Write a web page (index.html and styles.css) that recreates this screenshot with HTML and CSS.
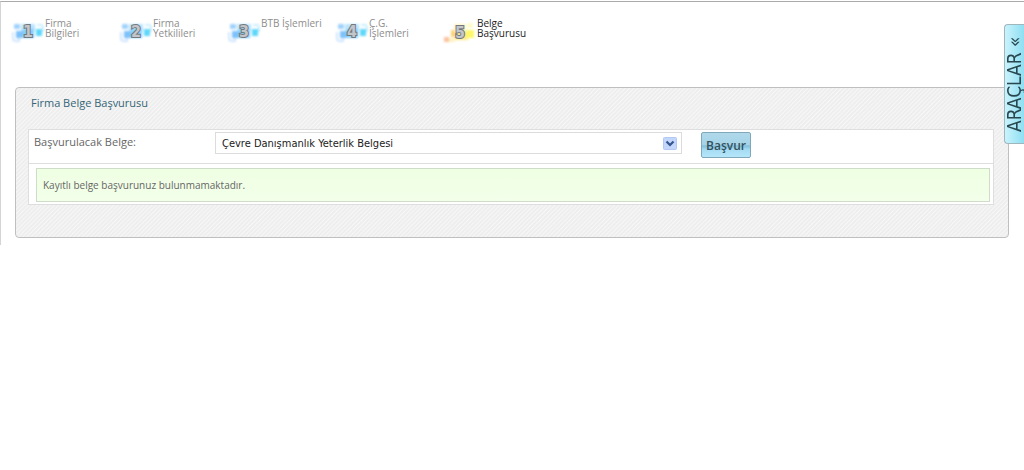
FILE: index.html
```html
<!DOCTYPE html>
<html lang="tr">
<head>
<meta charset="utf-8">
<title>Firma Belge Başvurusu</title>
<link rel="stylesheet" href="styles.css">
</head>
<body>
<svg class="defs" width="0" height="0" aria-hidden="true">
  <defs>
    <filter id="soft" x="-20%" y="-20%" width="140%" height="140%" color-interpolation-filters="sRGB"><feGaussianBlur stdDeviation="0.8"/></filter>
    <g id="tiles-blue" filter="url(#soft)">
      <rect x="2" y="4" width="6" height="5" rx="1" fill="#9fd2fb"/>
      <rect x="9" y="4" width="14" height="7" fill="#b9e4ff"/>
      <rect x="4" y="11" width="11" height="7" fill="#7fc2fb"/>
      <rect x="11" y="9" width="11" height="9" fill="#85d0fc"/>
      <rect x="24" y="9" width="6" height="7" fill="#5fd7fb"/>
      <path d="M25 5h4q2 0 2 3v4" fill="none" stroke="#c9eefd" stroke-width="2"/>
      <path d="M1 12v6q0 3 3 3h3v-3" fill="none" stroke="#cfe5fe" stroke-width="2"/>
    </g>
    <g id="tiles-gold" filter="url(#soft)">
      <rect x="0" y="17" width="5" height="5" fill="#fcc3a0"/>
      <rect x="7" y="10" width="6" height="7" fill="#fad27a"/>
      <rect x="5" y="18" width="6" height="4" fill="#fff2c4"/>
      <rect x="10" y="4" width="12" height="8" fill="#fff6c4"/>
      <rect x="11" y="12" width="13" height="8" fill="#ffe98a"/>
      <rect x="22" y="10" width="8" height="8" fill="#fff76a"/>
      <rect x="23" y="3" width="6" height="5" fill="#fffbcc"/>
    </g>
  </defs>
</svg>
<div class="page">
  <nav class="steps">
    <a class="step" href="#"><svg class="step-icon" viewBox="0 0 32 24"><use href="#tiles-blue"/><text class="digit" x="16" y="17">1</text></svg><span>Firma<br>Bilgileri</span></a>
    <a class="step" href="#"><svg class="step-icon" viewBox="0 0 32 24"><use href="#tiles-blue"/><text class="digit" x="16" y="17">2</text></svg><span>Firma<br>Yetkilileri</span></a>
    <a class="step" href="#"><svg class="step-icon" viewBox="0 0 32 24"><use href="#tiles-blue"/><text class="digit" x="16" y="17">3</text></svg><span>BTB İşlemleri</span></a>
    <a class="step" href="#"><svg class="step-icon" viewBox="0 0 32 24"><use href="#tiles-blue"/><text class="digit" x="16" y="17">4</text></svg><span>Ç.G.<br>İşlemleri</span></a>
    <a class="step current" href="#" aria-current="step"><svg class="step-icon" viewBox="0 0 32 24"><use href="#tiles-gold"/><text class="digit" x="16" y="18">5</text></svg><span>Belge<br>Başvurusu</span></a>
  </nav>
  <main class="panel">
    <h1 class="title">Firma Belge Başvurusu</h1>
    <div class="card">
      <form class="row">
        <label class="label" for="belge">Başvurulacak Belge:</label>
        <div class="picker">
          <select class="select" id="belge"><option>Çevre Danışmanlık Yeterlik Belgesi</option></select>
          <svg class="arrow" viewBox="0 0 14 13" aria-hidden="true"><rect x=".5" y=".5" width="13" height="12" rx="1" fill="#c3d6fb" stroke="#b3c8f3"/><path d="M3.5 4.5 7 8l3.5-3.5" fill="none" stroke="#35558f" stroke-width="2.2"/></svg>
        </div>
        <button class="apply" type="button">Başvur</button>
      </form>
      <div class="notice-row"><p class="notice">Kayıtlı belge başvurunuz bulunmamaktadır.</p></div>
    </div>
  </main>
</div>
<button class="tools" type="button"><span>ARAÇLAR «</span></button>
</body>
</html>
```
FILE: styles.css
```css
* { box-sizing: border-box; }
body {
  margin: 0;
  background: #fff;
  font-family: "Open Sans", "Noto Sans", sans-serif;
  overflow-x: hidden;
}
.defs { position: absolute; }
.page {
  margin-top: 1px;
  padding: 16px 15px 7px 11px;
  border-top: 1px solid #aaa;
  border-left: 1px solid #d4d4d4;
}
.steps { display: flex; height: 69px; }
.step {
  display: flex;
  gap: 1px;
  width: 108px;
  font-size: 10px;
  line-height: 10px;
  color: #8d8d8d;
  text-decoration: none;
  white-space: nowrap;
}
.step.current { color: #222; }
.step-icon { width: 32px; height: 24px; flex: none; margin-top: 2px; overflow: visible; }
.digit {
  font: bold 16px "DejaVu Sans Condensed", "Open Sans", sans-serif;
  text-anchor: middle;
  fill: #c2c6ca;
  stroke: #74797e;
  stroke-width: 2px;
  paint-order: stroke;
}
.panel {
  margin-left: 3px;
  padding: 7px 14px 32px 12px;
  border: 1px solid #bfbfbf;
  border-radius: 4px;
  background: repeating-linear-gradient(135deg, #eee 0 1px, #f7f7f7 2px, #eee 3px);
}
.title {
  margin: 0 0 19px 3px;
  font-size: 11px;
  line-height: 15px;
  font-weight: 400;
  color: #356575;
}
.card { border: 1px solid #dedede; background: #fff; }
.row { display: flex; align-items: flex-start; padding: 2px 5px 5px; }
.label {
  width: 181px;
  padding-top: 2px;
  font-size: 11px;
  line-height: 15px;
  color: #666;
}
.picker { position: relative; flex: 0 1 467px; }
.select {
  display: block;
  width: 100%;
  height: 22px;
  padding: 0 24px 0 6px;
  border: 1px solid #dcdcdc;
  border-radius: 0;
  background: #fff;
  appearance: none;
  font: 11px "DejaVu Sans Condensed", "Open Sans", sans-serif;
  color: #222;
}
.arrow { position: absolute; right: 5px; top: 5px; width: 14px; height: 13px; pointer-events: none; }
.apply {
  width: 50px;
  height: 26px;
  margin-left: 19px;
  padding: 0;
  border: 1px solid #7fa9ba;
  border-radius: 2px;
  background: linear-gradient(#b0d9eb 0, #a6d3e7 48%, #82bfd9 54%, #a4dbf2 68%, #b5e6fa 100%);
  font: 600 12px "Open Sans", "Noto Sans", sans-serif;
  color: #34515d;
}
.notice-row { padding: 4px 3px 2px 7px; border-top: 1px solid #dedede; }
.notice {
  margin: 0;
  padding: 9px 6px;
  border: 1px solid #cfdcc9;
  background: linear-gradient(#eeffe2, #f3ffea);
  font-size: 10px;
  line-height: 14px;
  color: #666;
}
.tools {
  position: absolute;
  top: 24px;
  right: 0;
  width: 20px;
  height: 120px;
  padding: 0;
  border: 1px solid #a0b6bd;
  border-right: 0;
  border-radius: 4px 0 0 4px;
  background: linear-gradient(90deg, #c9f3fc, #8edff2);
  font: 19px "DejaVu Sans Condensed", "Open Sans", sans-serif;
  color: #29474f;
}
.tools span {
  display: block;
  writing-mode: vertical-rl;
  transform: rotate(180deg);
  line-height: 19px;
  height: 118px;
  white-space: nowrap;
}
```
